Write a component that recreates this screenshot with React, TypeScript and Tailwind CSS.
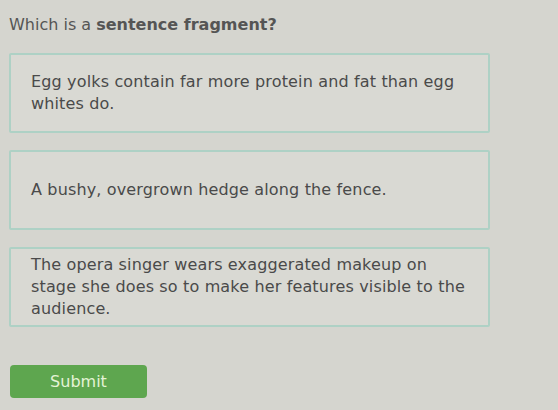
import React from "react";

const options = [
  "Egg yolks contain far more protein and fat than egg whites do.",
  "A bushy, overgrown hedge along the fence.",
  "The opera singer wears exaggerated makeup on stage she does so to make her features visible to the audience.",
];

export default function App() {
  return (
    <div
      className="w-[558px] h-[410px] bg-[#d5d5cf] text-[#4a4a4a] overflow-hidden"
      style={{ fontFamily: '"DejaVu Sans", Verdana, sans-serif' }}
    >
      <div className="pl-[9px] pr-[68px] pt-[15px]">
        <div className="text-[16px] leading-[20px] text-[#555] pl-[0px]">
          Which is a <span className="font-bold">sentence fragment?</span>
        </div>
        <div className="mt-[18px] flex flex-col gap-[17px]">
          {options.map((o, i) => (
            <div
              key={i}
              className="min-h-[80px] flex items-center border-2 border-[#aed1c5] rounded-[2px] bg-[#d9d9d3] pl-[20px] pr-[21px] py-[4px] text-[16px] leading-[22px] tracking-[0.15px]"
            >
              {o}
            </div>
          ))}
        </div>
        <button className="mt-[38px] ml-[1px] w-[137px] h-[33px] rounded-[4px] bg-[#5ea64f] text-[#e4f3d6] text-[16px] flex items-center justify-center">
          Submit
        </button>
      </div>
    </div>
  );
}
